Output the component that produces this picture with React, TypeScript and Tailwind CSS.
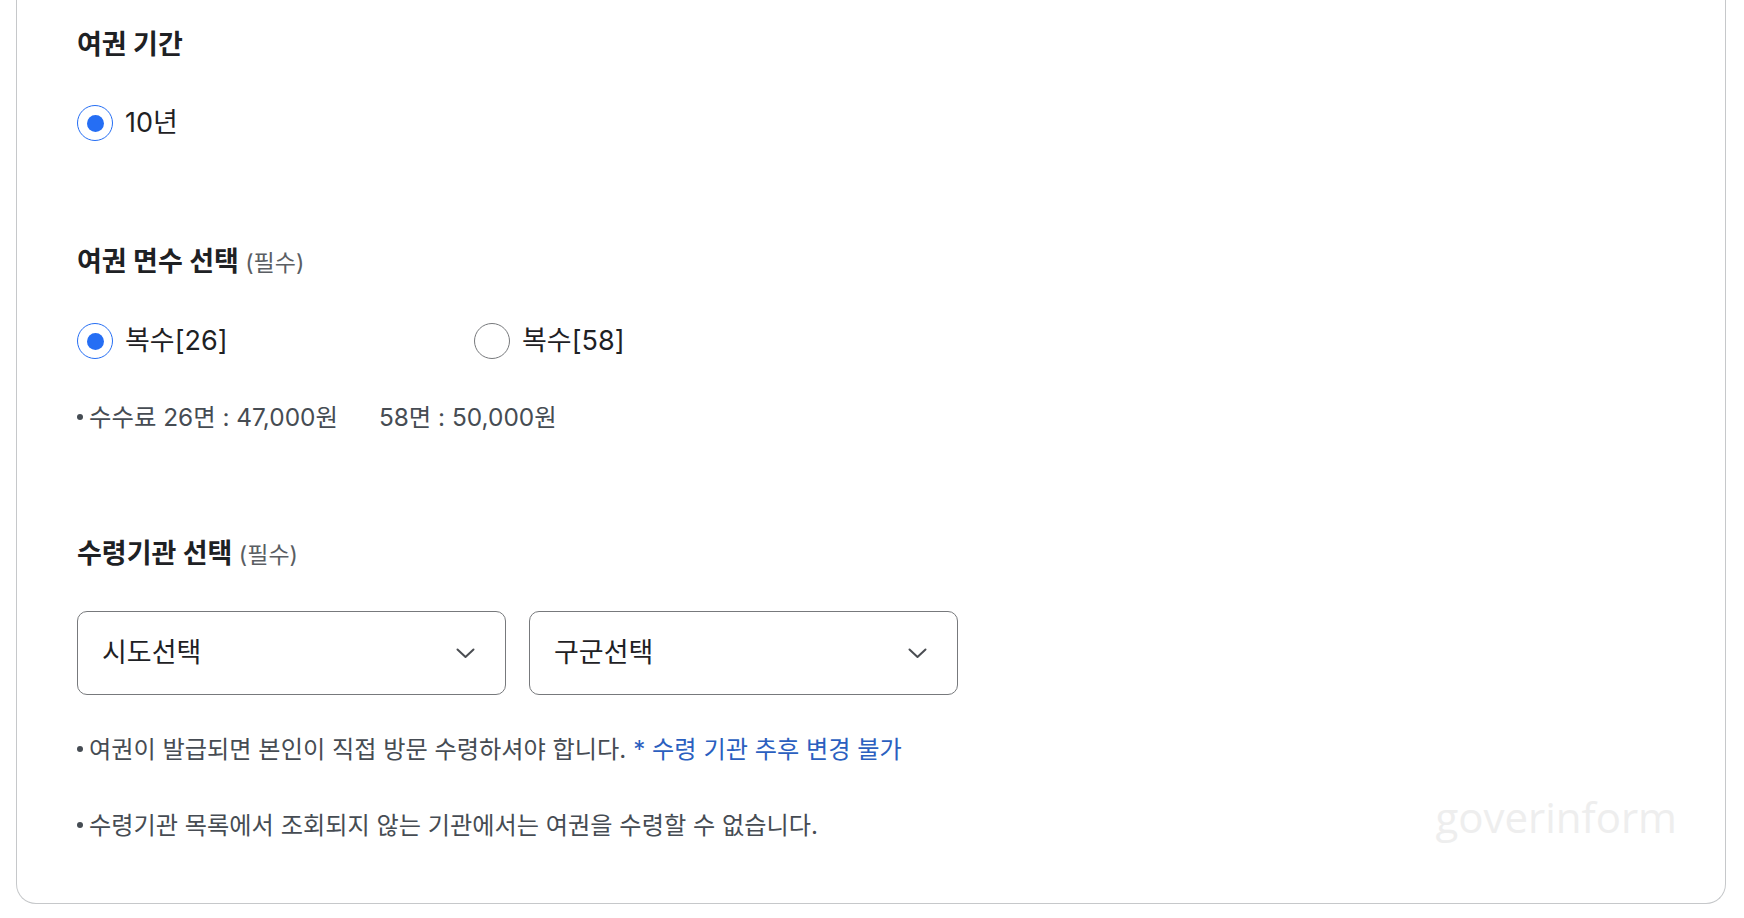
import React, { useState } from 'react';

// Inter for latin/digits, Noto Sans CJK for hangul
const font = { fontFamily: 'Inter, "Noto Sans CJK KR", sans-serif' };

const Bullet: React.FC = () => (
    <span className="mr-[6px] mb-[4px] inline-block h-[6px] w-[6px] rounded-full bg-[#464c53] align-middle" />
);

const Radio: React.FC<{ checked: boolean; label: string; onClick: () => void; className?: string }> = ({
    checked,
    label,
    onClick,
    className,
}) => (
    <button type="button" onClick={onClick} className={`flex items-center gap-3 ${className ?? ''}`}>
        <span
            className={`flex h-[36px] w-[36px] items-center justify-center rounded-full border ${
                checked ? 'border-[#256ef4]' : 'border-[#77797c]'
            }`}
        >
            {checked && <span className="h-[17px] w-[17px] rounded-full bg-[#256ef4]" />}
        </span>
        <span className="text-[27px] leading-[36px] text-[#1e2124]">{label}</span>
    </button>
);

const Select: React.FC<{ placeholder: string }> = ({ placeholder }) => (
    <div className="flex h-[84px] w-[429px] items-center justify-between rounded-[10px] border border-[#77797c] bg-white pl-[24px] pr-[30px]">
        <span className="text-[27px] text-[#1e2124]">{placeholder}</span>
        <svg width="19" height="11" viewBox="0 0 19 11" fill="none">
            <path d="M1.5 1.5 L9.5 9 L17.5 1.5" stroke="#4a4d52" strokeWidth="2" strokeLinecap="round" strokeLinejoin="round" />
        </svg>
    </div>
);

const App: React.FC = () => {
    const [pages, setPages] = useState<'26' | '58'>('26');

    return (
        <div className="min-h-[918px] bg-white" style={font}>
            <div className="relative ml-[16px] w-[1710px] rounded-b-[20px] border border-t-0 border-[#c6c8ca] pl-[60px] pt-[27px] pb-[61px]">
                {/* 여권 기간 */}
                <h2 className="text-[27px] font-bold leading-[36px] text-[#1e2124]">여권 기간</h2>
                <div className="mt-[42px]">
                    <Radio checked label="10년" onClick={() => {}} />
                </div>

                {/* 여권 면수 */}
                <h2 className="mt-[103px] text-[27px] font-bold leading-[36px] text-[#1e2124]">
                    여권 면수 선택 <span className="text-[23px] font-normal text-[#5a5e63]">(필수)</span>
                </h2>
                <div className="mt-[42px] flex">
                    <Radio className="w-[397px]" checked={pages === '26'} label="복수[26]" onClick={() => setPages('26')} />
                    <Radio checked={pages === '58'} label="복수[58]" onClick={() => setPages('58')} />
                </div>
                <p className="mt-[42px] text-[24.4px] leading-[32px] text-[#464c53]">
                    <Bullet />
                    수수료 26면 : 47,000원
                    <span className="ml-[41px]">58면 : 50,000원</span>
                </p>

                {/* 수령기관 */}
                <h2 className="mt-[103px] text-[27px] font-bold leading-[36px] text-[#1e2124]">
                    수령기관 선택 <span className="text-[23px] font-normal text-[#5a5e63]">(필수)</span>
                </h2>
                <div className="mt-[38px] flex gap-[23px]">
                    <Select placeholder="시도선택" />
                    <Select placeholder="구군선택" />
                </div>
                <p className="mt-[39px] text-[24.2px] leading-[32px] text-[#464c53]">
                    <Bullet />
                    여권이 발급되면 본인이 직접 방문 수령하셔야 합니다.{' '}
                    <span className="text-[#2b5fbf]">* 수령 기관 추후 변경 불가</span>
                </p>
                <p className="mt-[44px] text-[24.2px] leading-[32px] text-[#464c53]">
                    <Bullet />
                    수령기관 목록에서 조회되지 않는 기관에서는 여권을 수령할 수 없습니다.
                </p>

                <span
                    className="absolute bottom-[65px] right-[48px] text-[42px] leading-none text-[#eeeeee]"
                    style={{ fontFamily: '"Open Sans", sans-serif' }}
                >
                    goverinform
                </span>
            </div>
        </div>
    );
};

export default App;
